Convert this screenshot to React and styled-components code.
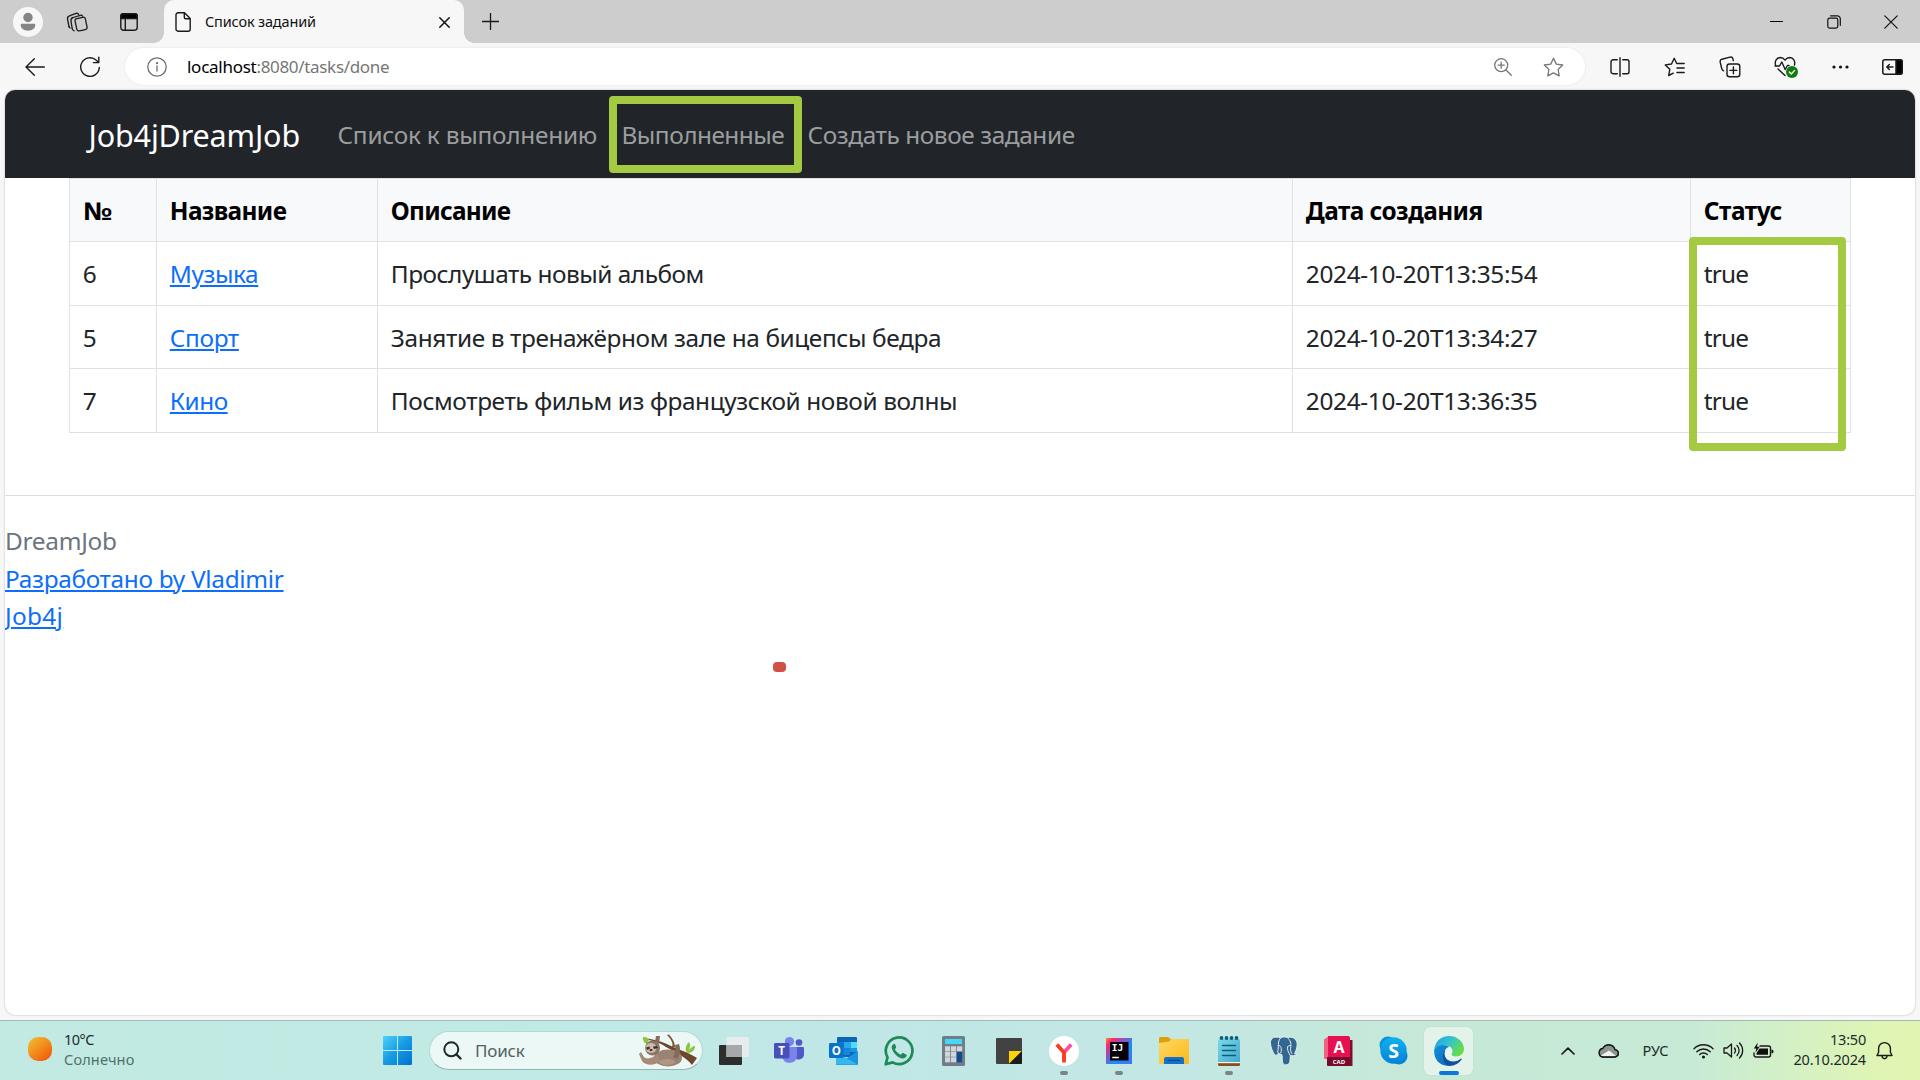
import React from "react";
import styled, { createGlobalStyle, css } from "styled-components";

const Global = createGlobalStyle`
  * { box-sizing: border-box; }
  html, body { margin: 0; padding: 0; overflow: hidden; }
  body { font-family: "Noto Sans", "Open Sans", sans-serif; color: #212529; background: #f7f7f7; }
  svg { display: block; flex: none; }
`;

const Screen = styled.div`
  width: 1920px;
  height: 1080px;
  display: flex;
  flex-direction: column;
  background: #f7f7f7;
`;

const Txt = styled.span`
  white-space: pre;
  letter-spacing: ${(p) => p.$track || 0}px;
  ${(p) => p.$stretch && css`
    display: inline-block;
    transform: scaleX(${p.$stretch});
    transform-origin: 0 50%;
  `}
`;

const Slot = styled.div`
  flex: none;
  width: ${(p) => p.$w}px;
  height: 100%;
  display: flex;
  align-items: center;
  justify-content: center;
`;

/* ---------- Tab strip ---------- */
const TabStrip = styled.header`
  height: 43px;
  flex: none;
  display: flex;
  background: #cdcdcd;
  padding-left: 2px;
`;
const Tab = styled.div`
  position: relative;
  width: 300px;
  height: 43px;
  margin-left: 6px;
  padding: 1px 14px 0 11px;
  background: #f7f7f7;
  border-radius: 10px 10px 0 0;
  display: flex;
  align-items: center;
  &::before, &::after {
    content: "";
    position: absolute;
    bottom: 0;
    width: 10px;
    height: 10px;
  }
  &::before { left: -10px; background: radial-gradient(circle at 0 0, transparent 9.5px, #f7f7f7 10px); }
  &::after { right: -10px; background: radial-gradient(circle at 100% 0, transparent 9.5px, #f7f7f7 10px); }
`;
const TabTitle = styled.div`
  flex: 1;
  padding: 0 0 2px 14px;
  font-size: 14.5px;
  line-height: 20px;
  color: #111;
`;
const Spacer = styled.div`flex: 1;`;

/* ---------- Toolbar ---------- */
const Toolbar = styled.div`
  height: 47px;
  flex: none;
  display: flex;
  align-items: center;
  padding-left: 7px;
`;
const AddressBar = styled.div`
  width: 1460px;
  height: 37px;
  margin: 0 7px 0 8px;
  padding: 0 7px 0 22px;
  border-radius: 19px;
  background: #fff;
  box-shadow: 0 0 3px rgba(0, 0, 0, 0.08);
  display: flex;
  align-items: center;
`;
const Url = styled.div`
  flex: 1;
  padding-left: 20px;
  font-size: 17px;
  line-height: 24px;
  color: #767676;
  b { font-weight: 400; color: #000; }
`;

/* ---------- Page ---------- */
const Viewport = styled.main`
  width: 1910px;
  height: 925px;
  flex: none;
  margin: 0 5px 5px;
  border-radius: 10px;
  overflow: hidden;
  background: #fff;
  box-shadow: 0 0 2px rgba(0, 0, 0, 0.3);
  font-size: 24.4px;
  line-height: 37.5px;
`;
const Navbar = styled.nav`
  height: 88px;
  background: #212529;
  display: flex;
  align-items: center;
  padding-left: 83.5px;
  color: #9b9d9e;
`;
const Brand = styled.a`
  width: 236.5px;
  margin-top: 1px;
  font-size: 30.5px;
  line-height: 46px;
  color: #fff;
`;
const NavLink = styled.a`
  position: relative;
  margin-top: 2px;
  padding: 0 12.5px;
  ${(p) => p.$w && css`width: ${p.$w}px;`}
`;
const Marker = styled.i`
  position: absolute;
  left: ${(p) => p.$x}px;
  top: ${(p) => p.$y}px;
  width: ${(p) => p.$w}px;
  height: ${(p) => p.$h}px;
  border: 8px solid #a4ca41;
  border-radius: 4px;
  pointer-events: none;
`;
const Grid = styled.div`
  position: relative;
  width: 1782px;
  margin-left: 64px;
  display: grid;
  grid-template-columns: 87px 221px 915px 398px 160px;
  grid-template-rows: 63px 64px 63px 64px;
  border-top: 1px solid #dee2e6;
  border-left: 1px solid #dee2e6;
`;
const Cell = styled.div`
  border-right: 1px solid #dee2e6;
  border-bottom: 1px solid #dee2e6;
  padding: 13.4px 0 0 12.8px;
  ${(p) => p.$head && css`
    padding-top: 13px;
    background: #f8f9fb;
    color: #000;
    font-weight: 700;
  `}
`;
const Link = styled.a`
  color: #0d6efd;
  text-decoration: underline;
  text-decoration-thickness: 2px;
  text-underline-offset: 2px;
`;
const Foot = styled.footer`
  margin-top: 62px;
  padding-top: 26px;
  border-top: 1px solid #dcdfe1;
  display: flex;
  flex-direction: column;
  align-items: flex-start;
  color: #6c757d;
`;
const RedMark = styled.div`
  width: 13px;
  height: 10px;
  margin: 27.5px 0 0 768px;
  border-radius: 4px;
  background: #d15045;
`;

/* ---------- Taskbar ---------- */
const Taskbar = styled.div`
  height: 60px;
  flex: none;
  display: flex;
  align-items: center;
  border-top: 1px solid #a3bab4;
  background: linear-gradient(90deg, #c2eae3 0%, #c1eae4 22%, #c0e7e6 45%, #c3e7e3 62%, #c6e9d7 75%, #c7ead6 88%, #d3f0c6 93%, #e0f5b3 98%, #e1f5b2 100%);
  font-size: 14.5px;
  line-height: 20px;
  color: #1b2b28;
`;
const Weather = styled.div`
  width: 366px;
  padding-left: 28px;
  display: flex;
  align-items: center;
  gap: 12px;
`;
const Sun = styled.div`
  width: 24px;
  height: 24px;
  border-radius: 10px;
  margin-bottom: 3px;
  background: linear-gradient(140deg, #edb72e 10%, #f48a1c 50%, #ee5c0c 90%);
`;
const Stack = styled.div`
  display: flex;
  flex-direction: column;
  align-items: ${(p) => (p.$end ? "flex-end" : "flex-start")};
  margin-bottom: 4px;
  ${(p) => p.$w && css`width: ${p.$w}px;`}
  em { font-style: normal; color: #50706b; }
`;
const Search = styled.div`
  width: 274px;
  height: 39px;
  margin-right: 3px;
  padding: 0 3px 0 13px;
  border-radius: 20px;
  background: #ecf8f6;
  border: 1px solid #b2d9d3;
  border-bottom-color: #93b5b0;
  display: flex;
  align-items: center;
  font-size: 17px;
  color: #54615f;
`;
const SearchText = styled.div`flex: 1; padding-left: 13px;`;
const AppSlot = styled.div`
  position: relative;
  width: 55px;
  height: 48px;
  display: flex;
  align-items: center;
  justify-content: center;
  &::before {
    content: "";
    position: absolute;
    z-index: 0;
    inset: 0 3px;
    border-radius: 6px;
    background: ${(p) => (p.$active ? "#e3f3ea" : "transparent")};
    box-shadow: ${(p) => (p.$active ? "0 0 1px #9fc4b4" : "none")};
  }
  &::after {
    content: "";
    position: absolute;
    bottom: 0;
    width: ${(p) => (p.$active ? 20 : p.$running ? 8 : 0)}px;
    height: 4px;
    border-radius: 2px;
    background: ${(p) => (p.$active ? "#0a78d4" : "#768784")};
  }
  svg { position: relative; }
`;
const Lang = styled.div`
  flex: none;
  width: 65px;
  padding-bottom: 2px;
  text-align: center;
`;

/* ---------- Icons ---------- */
const Svg = ({ w, h, children, c = "#1a1a1a", sw = 1.5 }) => (
  <svg width={w} height={h} viewBox={`0 0 ${w} ${h}`} fill="none" stroke={c} strokeWidth={sw} strokeLinecap="round" strokeLinejoin="round">
    {children}
  </svg>
);

const Profile = () => (
  <Svg w={30} h={30} c="none">
    <circle cx="15" cy="15" r="15" fill="#f7f7f7" />
    <circle cx="15" cy="10.5" r="4.7" fill="#858585" />
    <path d="M8.5 16.8h13a.8.8 0 0 1 .8.8c0 4-3 6.2-7.3 6.2s-7.3-2.2-7.3-6.2a.8.8 0 0 1 .8-.8z" fill="#858585" />
  </Svg>
);
const Workspaces = () => (
  <Svg w={22} h={22} sw={1.3}>
    <rect x="9.8" y="6.8" width="10.5" height="12.5" rx="2.2" transform="rotate(-12 15 13)" fill="#cdcdcd" />
    <path d="M6.2 17.5 5 10.2C4.7 8.2 5.4 7 7.2 6.5l7-2.2c1.200-.3 2 .1 2.300.9" />
    <path d="M3 15.5 1.600 8.500C1.200 6.700 1.900 5.400 3.500 4.900L10 2.400c1.200-.4 2.200 0 2.600 1" />
    <path d="M6.2 17.5c.2 1.2 1 2 2 2.300M3 15.500c.2.600.5 1.100 1 1.400" />
  </Svg>
);
const TabActions = () => (
  <Svg w={18} h={18} sw={1.4}>
    <rect x=".8" y=".8" width="16.4" height="16.4" rx="2.6" />
    <path d="M.8 5.5V3.300A2.500 2.500 0 0 1 3.300.8h11.400a2.500 2.500 0 0 1 2.500 2.500v2.200z" fill="#000" />
    <path d="M5.300 6v11" />
  </Svg>
);
const PageIcon = () => (
  <Svg w={16} h={20} sw={1.4}>
    <path d="M3 .8h6.500l5.700 5.700v10.700a2 2 0 0 1-2 2H3a2 2 0 0 1-2-2V2.800a2 2 0 0 1 2-2zM9.300 1v4.200a1.500 1.500 0 0 0 1.500 1.500H15" />
  </Svg>
);
const Cross = ({ s, sw }) => (
  <Svg w={s} h={s} sw={sw} c="#111"><path d={`M.8 .8L${s - 0.8} ${s - 0.8}M${s - 0.8} .8L.8 ${s - 0.8}`} /></Svg>
);
const Plus = () => <Svg w={17} h={17} sw={1.3}><path d="M8.500.5v16M.5 8.500h16" /></Svg>;
const Minimize = () => <Svg w={13} h={13} sw={1.1} c="#000"><path d="M.5 6.500h12" /></Svg>;
const Restore = () => (
  <Svg w={14} h={14} sw={1.2} c="#111">
    <rect x=".8" y="3.1" width="10" height="10" rx="1.8" />
    <path d="M3.500.8h6.800a3 3 0 0 1 3 3v6.500" />
  </Svg>
);
const Back = () => <Svg w={20} h={18} sw={1.4}><path d="M19.300 9H1M9.300.8 1 9l8.300 8.200" /></Svg>;
const Reload = () => (
  <Svg w={22} h={22} sw={1.4}><path d="M20.300 11.500a9.300 9.300 0 1 1-3-7.300l2.300 2.200M19.800 1.200v5.400h-5.400" /></Svg>
);
const Info = () => (
  <Svg w={20} h={20} c="#6f6f6f" sw={1.3}>
    <circle cx="10" cy="10" r="9.2" /><path d="M10 9v5" /><circle cx="10" cy="6.2" r=".5" fill="#6f6f6f" />
  </Svg>
);
const ZoomIn = () => (
  <Svg w={18} h={18} c="#767676" sw={1.3}><circle cx="7.2" cy="7.2" r="6.5" /><path d="m12 12 5.300 5.300M4.200 7.200h6M7.200 4.200v6" /></Svg>
);
const STAR = "M10.500 1.300l2.800 5.800 6.400.9-4.600 4.500 1.100 6.400-5.700-3-5.700 3 1.100-6.400L1.300 8l6.400-.9z";
const Star = () => <Svg w={21} h={20} c="#767676" sw={1.3}><path d={STAR} /></Svg>;
const Split = () => (
  <Svg w={20} h={20} sw={1.4}>
    <path d="M10 .8v18.400M7.300 2.800H3A2 2 0 0 0 1 4.800v9.900a2 2 0 0 0 2 2h4.300M12.700 2.800H17a2 2 0 0 1 2 2v9.900a2 2 0 0 1-2 2h-4.300" />
  </Svg>
);
const Favorites = () => (
  <Svg w={21} h={20} sw={1.4}>
    <path d="M12.700 6.500 10.200 1.300 7.500 7l-6.200.9 4.500 4.400-1.100 6.200 4.600-2.300M13.500 6.500h6.700M13 11h7.200M13 15.500h7.200" />
  </Svg>
);
const Collections = () => (
  <Svg w={22} h={22} sw={1.4}>
    <rect x="8" y="8" width="12.8" height="12.8" rx="2.5" /><path d="M14.400 11v6.800M11 14.400h6.800" />
    <path d="M4.600 14.800C3.300 14.300 3 13.500 2.700 12.500L1.200 6.200C.9 4.700 1.500 3.600 2.900 3.200L11 1.100c1.500-.3 2.500.3 2.900 1.700l.4 1.800" />
  </Svg>
);
const Health = () => (
  <Svg w={24} h={22} sw={1.4}>
    <path d="M1.500 9C.6 5.300 2.500 1.700 6.300 1.500c2 0 3.500 1 4.700 2.600 1.200-1.600 2.700-2.600 4.700-2.600 3.800.2 5.700 3.800 4.800 7.500M4 13l7 6.500M1 10h4.500l2.300-4 3.400 7.500 2.300-4h1.500" />
    <circle cx="18" cy="16" r="6" fill="#107c10" stroke="none" /><path d="m15.300 16 2 2 3.300-3.600" stroke="#fff" />
  </Svg>
);
const Dots = () => (
  <Svg w={17} h={4} c="none"><g fill="#111"><circle cx="2" cy="2" r="1.6" /><circle cx="8.5" cy="2" r="1.6" /><circle cx="15" cy="2" r="1.6" /></g></Svg>
);
const Sidebar = () => (
  <Svg w={21} h={16} sw={1.5}>
    <rect x=".8" y=".8" width="19.4" height="14.4" rx="2" /><path d="M14 1h4.200a2 2 0 0 1 2 2v10a2 2 0 0 1-2 2H14z" fill="#000" /><path d="M11 8H5M7.300 5.500 4.800 8l2.500 2.500" />
  </Svg>
);

const Start = () => (
  <Svg w={29} h={29} c="none">
    <defs><linearGradient id="win" gradientUnits="userSpaceOnUse" x1="0" y1="0" x2="29" y2="29"><stop offset="0" stopColor="#4fd0fb" /><stop offset=".5" stopColor="#169be3" /><stop offset="1" stopColor="#0070d2" /></linearGradient></defs>
    <path d="M1 0h13v14H0V1a1 1 0 0 1 1-1zM15 0h13a1 1 0 0 1 1 1v13H15zM0 15h14v14H1a1 1 0 0 1-1-1zM15 15h14v13a1 1 0 0 1-1 1H15z" fill="url(#win)" />
  </Svg>
);
const Glass = () => <Svg w={19} h={19} sw={2} c="#22282a"><circle cx="8.3" cy="8.3" r="7" /><path d="m13.500 13.500 4 4" strokeWidth="2.4" /></Svg>;
const Sloth = () => (
  <Svg w={60} h={34} c="none">
    <path d="M4 4c10 1 18 3 28 8 8 4 17 6 26 12l-5 7C46 22 34 17 27 13 20 8 12 6 4 5z" fill="#6d472b" />
    <path d="M33 13C35 9 31 4 28 1l2-.5c4 4 6 9 6 13z" fill="#7a5334" />
    <path d="M4 3c2 0 5 0 6 3l-2 4C5 9 4 7 4 3z" fill="#8bc53f" />
    <path d="M47 17c-1-4 1-7 3-9 2 3 1 6-1 9 2-3 5-5 7-5 0 4-3 7-7 7z" fill="#8bc53f" />
    <ellipse cx="29" cy="24" rx="14" ry="8.5" fill="#9c8371" />
    <path d="M38 25c3-4 4-9 2-15l-4 1c1 5 0 9-2 12z" fill="#82695a" />
    <path d="M18 20c-4 4-10 6-13 3L2 18l-2 2 3 7c4 5 13 5 18 0z" fill="#a58b78" />
    <path d="M16 8l1-6 4 0-1 8z" fill="#866d5d" />
    <circle cx="13.5" cy="14" r="7.5" fill="#8b7465" />
    <ellipse cx="12" cy="14" rx="5.5" ry="5" fill="#cbbba8" />
    <path d="M7 13.500l3.500-1 .5 2-3 1.500zM14 12.500l4-.5 1 2-4 1z" fill="#3d3029" />
    <ellipse cx="12" cy="16" rx="1.5" ry="1" fill="#2b211c" />
    <ellipse cx="28" cy="28" rx="8" ry="3" fill="#b6a08d" opacity=".7" />
  </Svg>
);
const TaskView = () => (
  <Svg w={30} h={28} c="none">
    <rect y="8" width="23" height="20" rx="1" fill="#2d2d2d" /><path d="M8.500 0H29a1 1 0 0 1 1 1v18a1 1 0 0 1-1 1H7.500V1a1 1 0 0 1 1-1z" fill="#e9ecec" /><path d="M7.500 8H23v12H7.500z" fill="#a6a9a9" />
  </Svg>
);
const Letter = ({ x, y, s, children }) => (
  <text x={x} y={y} fontSize={s} fontWeight={700} fill="#fff" stroke="none" textAnchor="middle" fontFamily={'"Open Sans", sans-serif'}>{children}</text>
);
const Teams = () => (
  <Svg w={30} h={27} c="none">
    <circle cx="25" cy="5.5" r="3.3" fill="#5059c9" /><path d="M20 10h9a1 1 0 0 1 1 1v6a5 5 0 0 1-5 5.500c-3 0-5-2-5-5z" fill="#5059c9" />
    <circle cx="15.5" cy="4.6" r="4.6" fill="#7b83eb" /><path d="M9 10h13a1 1 0 0 1 1 1v8a7.500 7.500 0 0 1-14.500 2z" fill="#7b83eb" />
    <rect y="6" width="15.5" height="15.5" rx="1.4" fill="#4650b8" /><Letter x={7.7} y={18} s={11.5}>T</Letter>
  </Svg>
);
const Outlook = () => (
  <Svg w={29} h={28} c="none">
    <rect x="8" width="20" height="20" rx="1" fill="#0a65b3" /><path d="M8 5h7v6H8z" fill="#0f78d4" /><path d="M15 5h7v6h-7z" fill="#28a8ea" /><path d="M22 5h6v6h-6z" fill="#50d9ff" /><path d="M8 11h13v7H8z" fill="#1387d8" /><path d="M21 11h7v4h-7z" fill="#1a95e0" />
    <path d="M29 14v13a1 1 0 0 1-1 1H8a1.200 1.200 0 0 1-1-1l11-6z" fill="#1d93e0" /><path d="M7 15l21.500 12.500H8a1 1 0 0 1-1-1z" fill="#35b8f1" />
    <rect y="6" width="14.5" height="15" rx="1.3" fill="#0873cb" /><Letter x={7.3} y={17.8} s={11.5}>O</Letter>
  </Svg>
);
const WhatsApp = () => (
  <Svg w={30} h={30} c="#1d8a57" sw={2.7}>
    <path d="M1.700 28.300l1.800-7A13.300 13.300 0 1 1 8.600 26.400z" />
    <path d="M10 7.700c-2 1-2.800 3-2 5.300 1.500 4.300 4.700 7.600 9 9.200 2.300.8 4.600 0 5.600-2.100.3-.7.1-1.300-.5-1.600l-2.800-1.400c-.6-.2-1-.1-1.400.4l-1 1.200c-2.800-1-4.800-3-6-5.500l1-1.200c.3-.4.4-.8.2-1.300L11 8.300c-.2-.5-.5-.7-1-.6z" fill="#1d8a57" stroke="none" />
  </Svg>
);
const Calc = () => (
  <Svg w={23} h={30} c="none">
    <rect width="23" height="30" rx="1.5" fill="#737d87" /><rect x="3" y="3" width="17" height="5" fill="#44d8f6" />
    <g fill="#cfd6dc">{[10.3, 15.8, 21.3].map((y) => [3, 9, 15].map((x) => <rect key={`${x}-${y}`} x={x} y={y} width="5.2" height="5" />))}</g>
    <rect x="14.8" y="15.8" width="5.5" height="10.8" fill="#124a8c" />
  </Svg>
);
const Sticky = () => (
  <Svg w={26} h={26} c="none"><rect width="26" height="26" rx="1" fill="#424242" /><path d="M13 13h13L13 26z" fill="#fdd404" /><path d="M26 13v12a1 1 0 0 1-1 1H13z" fill="#1c1c1c" /></Svg>
);
const Yandex = () => (
  <Svg w={30} h={30} c="none">
    <circle cx="15" cy="15" r="15" fill="#fff" />
    <path d="M22.200 8.500 15 16.500" stroke="#f84f9e" strokeWidth="3.8" strokeLinecap="butt" />
    <path d="M7.800 8.500 15 16.500v10" stroke="#fb3a20" strokeWidth="3.8" strokeLinecap="butt" />
  </Svg>
);
const Idea = () => (
  <Svg w={26} h={26} c="none">
    <defs><linearGradient id="ij" x1="0" y1="0" x2="1" y2="1"><stop offset="0" stopColor="#fe8a2c" /><stop offset=".16" stopColor="#fa2a70" /><stop offset=".4" stopColor="#8456c9" /><stop offset=".6" stopColor="#1f8df5" /><stop offset="1" stopColor="#4671f8" /></linearGradient></defs>
    <rect width="26" height="26" fill="url(#ij)" /><rect x="4" y="4" width="18.5" height="18.5" fill="#050308" />
    <text x="5.800" y="13" fontSize="9.5" fontWeight="700" fill="#fff" fontFamily={'"DejaVu Sans Mono", "Liberation Mono", monospace'}>IJ</text>
    <path d="M6.300 19.500h6.500" stroke="#fff" strokeLinecap="butt" />
  </Svg>
);
const Explorer = () => (
  <Svg w={30} h={28} c="none">
    <defs><linearGradient id="ex" x1="0" y1="0" x2="1" y2="1"><stop offset="0" stopColor="#ffd866" /><stop offset="1" stopColor="#fbb916" /></linearGradient></defs>
    <path d="M0 1.500A1.500 1.500 0 0 1 1.500 0H9l4 3-1 4H0z" fill="#dea006" /><path d="M10 4.500 13 2h16a1 1 0 0 1 1 1v23a1 1 0 0 1-1 1H1a1 1 0 0 1-1-1V6z" fill="url(#ex)" />
    <path d="M5 27v-5a2 2 0 0 1 2-2h16a2 2 0 0 1 2 2v5z" fill="#1470c8" /><path d="M9 23.300h12" stroke="#0b4c8f" strokeWidth="1.2" />
  </Svg>
);
const Notepad = () => (
  <Svg w={22} h={30} c="none">
    <defs><linearGradient id="np" x1="0" y1="0" x2="1" y2="1"><stop offset="0" stopColor="#7ed9ea" /><stop offset="1" stopColor="#3fa9cc" /></linearGradient></defs>
    <rect y="3" width="22" height="24" rx="1.5" fill="url(#np)" /><path d="M0 27h22v1.500a1.500 1.500 0 0 1-1.500 1.500h-19A1.500 1.500 0 0 1 0 28.500z" fill="#8d4b1a" /><path d="M0 26h22v1.200H0z" fill="#eef6f7" />
    <g fill="#0b5f7a">{[3.5, 8.5, 13.5, 18.5].map((x) => <circle key={x} cx={x} cy="2" r="1.9" />)}</g>
    <path d="M4.500 9.500h13M4.500 14.500h13M4.500 19.500h13" stroke="#0b5f7a" strokeWidth="1.5" />
  </Svg>
);
const Postgres = () => (
  <Svg w={28} h={30} c="#e4f1ee" sw={1}>
    <path d="M6 1c-4 0-6 3-5.500 7 .3 3 2 8 4 10.500 1.300 1.500 2.700.5 3.500-.8 1 .7 2.300.8 3.500.5 1 1.600.6 3.300.8 6 .2 3 1 4.800 3.500 4.700 3-.1 4-1.700 4.200-4.400l.4-5c2 .6 5 .3 6.400-1-.9-.3-1.600-.4-2.300-.7C26.500 14.500 27.700 9 27 6.500 26 2.500 22 .2 17.500 1.500 15 .6 12.500.7 10.500 1.800 9.200 1.200 7.500 1 6 1z" fill="#336791" />
    <path d="M10.500 2C8 4.500 8.500 7.500 8.300 11c0 3-1.200 4.500 0 6.500 2 .5 3.200-1 3-3.500-.1-2.500-.2-4.500-3-4.500M17.500 1.700c3 2.800 3.800 5.800 3.300 9-.4 2.800-.5 4.800 1 6.800M20.500 9.500c-2 0-3.200.5-3 2.700.1 2.600 1.300 4.600 2.600 7" />
  </Svg>
);
const Autocad = () => (
  <Svg w={29} h={30} c="none">
    <path d="M4 4h24.500v26H4z" fill="#7a1030" /><path d="M0 3.500 5 0v23H0z" fill="#f2627f" /><path d="M4 0h20a2 2 0 0 1 2 2v20H4z" fill="#e61050" /><path d="M3 21h23v9H4a1 1 0 0 1-1-1z" fill="#76092c" />
    <Letter x={15} y={16.5} s={16}>A</Letter><Letter x={15} y={27.5} s={6}>CAD</Letter>
  </Svg>
);
const Skype = () => (
  <Svg w={29} h={29} c="none">
    <defs><linearGradient id="sk" x1="0" y1="0" x2="0" y2="1"><stop offset="0" stopColor="#0fb2ee" /><stop offset="1" stopColor="#0783d8" /></linearGradient></defs>
    <circle cx="9" cy="9" r="8.5" fill="#0a94dc" /><circle cx="20" cy="20" r="8.5" fill="#0783d8" /><circle cx="14.5" cy="14.5" r="13.2" fill="url(#sk)" /><Letter x={14.5} y={21.5} s={19.5}>S</Letter>
  </Svg>
);
const Edge = () => (
  <Svg w={30} h={30} c="none">
    <defs>
      <linearGradient id="e1" x1="0" y1="0" x2="1" y2=".5"><stop offset="0" stopColor="#1f9fdc" /><stop offset=".5" stopColor="#30c2d3" /><stop offset="1" stopColor="#67dc4b" /></linearGradient>
      <linearGradient id="e2" x1="0" y1="0" x2="1" y2="1"><stop offset="0" stopColor="#1390d8" /><stop offset="1" stopColor="#0a64bb" /></linearGradient>
    </defs>
    <path d="M.2 14C1 5.500 7 0 15 0c9 0 15 6.500 15 12.800 0 4.700-3.500 7.700-7.800 7.700-3.600 0-5.200-1.500-4.700-2.600 1.500-1.800 1.400-5-1-7C11.500 8 4 8.500.2 14z" fill="url(#e1)" />
    <path d="M.2 14C3 8.500 11 7.500 15.500 11 12 11.500 10 14.500 10 18c0 6 4.500 10 10 9.800-1.500 1.200-4 2.200-7 1.900C5 29.200-.5 22.500.2 14z" fill="url(#e2)" />
    <path d="M11.500 13.500C8.500 20 13 25.500 19 25.500c3.500 0 6-1.500 7.800-2.800.6-.4 1.200.2.8.8A14.700 14.700 0 0 1 15.500 30C9.500 29 6.500 18.500 11.500 13.500z" fill="#124f9c" />
    <path d="M12 16.500c-.3-2 1-4.500 3.500-5.500 3 1.800 3.500 5 2 7-.5 1 1 2.400 3.500 2.600-3 1-8 .5-9-4.100z" fill="#e8f5f0" />
  </Svg>
);
const Chevron = () => <Svg w={14} h={8} sw={1.7}><path d="m1 7 6-5.800L13 7" /></Svg>;
const Cloud = () => (
  <Svg w={21} h={15} sw={1.3}>
    <path d="M5 14h11.500a3.700 3.700 0 0 0 .4-7.400A6.500 6.500 0 0 0 4.900 5.300 4.400 4.400 0 0 0 5 14z" fill="#8e9693" /><path d="M2 13 11 7.500l7 5.500-1.500.5H5z" fill="#eef2f1" stroke="none" /><path d="M5 14h11.500a3.700 3.700 0 0 0 .4-7.400A6.500 6.500 0 0 0 4.900 5.300 4.400 4.400 0 0 0 5 14z" />
  </Svg>
);
const Wifi = () => (
  <Svg w={21} h={16} sw={1.4}><path d="M1 5.700a13.500 13.500 0 0 1 19 0M3.800 8.700a9.500 9.500 0 0 1 13.400 0M6.700 11.500a5.400 5.400 0 0 1 7.600 0" /><circle cx="10.5" cy="14" r="1.5" fill="#111" stroke="none" /></Svg>
);
const Volume = () => (
  <Svg w={21} h={17} sw={1.3}><path d="M1 6v5h3l4.500 4V2L4 6zM11.500 6a4 4 0 0 1 0 5M14 3.500a7 7 0 0 1 0 10M16.500 1a10.500 10.500 0 0 1 0 15" /></Svg>
);
const Battery = () => (
  <Svg w={21} h={17} sw={1.4}>
    <path d="M7 4h8.500a2 2 0 0 1 2 2v7a2 2 0 0 1-2 2H3a2 2 0 0 1-2-2v-2" /><path d="M6.500 6.500H15v6.300H3.500V11z" fill="#111" stroke="none" /><path d="M18.500 7.500c1.200 0 2 .7 2 2s-.8 2-2 2z" fill="#111" stroke="none" /><path d="M4.800.5.8 6.500h2.400L2.500 10.500l4.200-5.800H4z" fill="#111" stroke="none" />
  </Svg>
);
const Bell = () => (
  <Svg w={17} h={19} sw={1.4}><path d="M1 14.500h15l-1.600-3.200V7.500a5.900 5.900 0 0 0-11.800 0v3.800zM6 15c.2 1.800 1.200 2.700 2.500 2.700S10.800 16.800 11 15" /></Svg>
);

/* Each entry: text, letter spacing in px */
const HEAD = [["№", 0, 1.16], ["Название", -0.65], ["Описание", -0.72], ["Дата создания", -0.54], ["Статус", -0.45]];
const ROWS = [
  [["6"], ["Музыка", -0.42], ["Прослушать новый альбом", -0.49], ["2024-10-20T13:35:54", -0.32], ["true", -0.8]],
  [["5"], ["Спорт", -0.35], ["Занятие в тренажёрном зале на бицепсы бедра", -0.38], ["2024-10-20T13:34:27", -0.32], ["true", -0.8]],
  [["7"], ["Кино", -0.5], ["Посмотреть фильм из французской новой волны", -0.39], ["2024-10-20T13:36:35", -0.32], ["true", -0.8]],
];
const APPS = [
  [TaskView], [Teams], [Outlook], [WhatsApp], [Calc], [Sticky], [Yandex, "run"], [Idea, "run"],
  [Explorer], [Notepad, "run"], [Postgres], [Autocad], [Skype], [Edge, "active"],
];

export default function App() {
  return (
    <Screen>
      <Global />
      <TabStrip>
        <Slot $w={52}><Profile /></Slot>
        <Slot $w={46}><Workspaces /></Slot>
        <Slot $w={58}><TabActions /></Slot>
        <Tab>
          <PageIcon />
          <TabTitle><Txt $track={-0.16}>Список заданий</Txt></TabTitle>
          <Cross s={11} sw={1.5} />
        </Tab>
        <Slot $w={53}><Plus /></Slot>
        <Spacer />
        <Slot $w={57.3}><Minimize /></Slot>
        <Slot $w={57.3}><Restore /></Slot>
        <Slot $w={57.3}><Cross s={14} sw={1.2} /></Slot>
      </TabStrip>
      <Toolbar>
        <Slot $w={55}><Back /></Slot>
        <Slot $w={55}><Reload /></Slot>
        <AddressBar>
          <Info />
          <Url><b><Txt $track={-0.27}>localhost</Txt></b><Txt $track={-0.32}>:8080/tasks/done</Txt></Url>
          <Slot $w={50}><ZoomIn /></Slot>
          <Slot $w={50}><Star /></Slot>
        </AddressBar>
        <Slot $w={55}><Split /></Slot>
        <Slot $w={55}><Favorites /></Slot>
        <Slot $w={55}><Collections /></Slot>
        <Slot $w={57}><Health /></Slot>
        <Slot $w={52}><Dots /></Slot>
        <Slot $w={52}><Sidebar /></Slot>
      </Toolbar>
      <Viewport>
        <Navbar>
          <Brand><Txt $track={-0.15}>Job4jDreamJob</Txt></Brand>
          <NavLink $w={284}><Txt $track={-0.25}>Список к выполнению</Txt></NavLink>
          <NavLink $w={186}>
            <Txt $track={-0.5}>Выполненные</Txt>
            <Marker $x={0} $y={-20} $w={193} $h={77} />
          </NavLink>
          <NavLink><Txt $track={-0.42}>Создать новое задание</Txt></NavLink>
        </Navbar>
        <Grid>
          {HEAD.map(([t, track, stretch]) => (
            <Cell key={t} $head><Txt $track={track} $stretch={stretch}>{t}</Txt></Cell>
          ))}
          {ROWS.map((row) => row.map(([t, track], i) => (
            <Cell key={`${row[0][0]}-${i}`}>
              {i === 1 ? <Link><Txt $track={track}>{t}</Txt></Link> : <Txt $track={track}>{t}</Txt>}
            </Cell>
          )))}
          <Marker $x={1618.5} $y={58} $w={157} $h={214} />
        </Grid>
        <Foot>
          <Txt $track={-0.3}>DreamJob</Txt>
          <Link><Txt $track={-0.32}>Разработано by Vladimir</Txt></Link>
          <Link><Txt $track={0.3}>Job4j</Txt></Link>
        </Foot>
        <RedMark />
      </Viewport>
      <Taskbar>
        <Weather>
          <Sun />
          <Stack><Txt $track={-0.5}>10°C</Txt><em><Txt $track={0.15}>Солнечно</Txt></em></Stack>
        </Weather>
        <Slot $w={63}><Start /></Slot>
        <Search>
          <Glass />
          <SearchText><Txt $track={-0.2}>Поиск</Txt></SearchText>
          <Sloth />
        </Search>
        {APPS.map(([Icon, state], i) => (
          <AppSlot key={i} $running={state === "run"} $active={state === "active"}><Icon /></AppSlot>
        ))}
        <Spacer />
        <Slot $w={50}><Chevron /></Slot>
        <Slot $w={30}><Cloud /></Slot>
        <Lang><Txt>РУС</Txt></Lang>
        <Slot $w={30}><Wifi /></Slot>
        <Slot $w={30}><Volume /></Slot>
        <Slot $w={30}><Battery /></Slot>
        <Stack $end $w={88}><Txt $track={-0.2}>13:50</Txt><Txt $track={-0.15}>20.10.2024</Txt></Stack>
        <Slot $w={37}><Bell /></Slot>
        <Slot $w={17} />
      </Taskbar>
    </Screen>
  );
}
